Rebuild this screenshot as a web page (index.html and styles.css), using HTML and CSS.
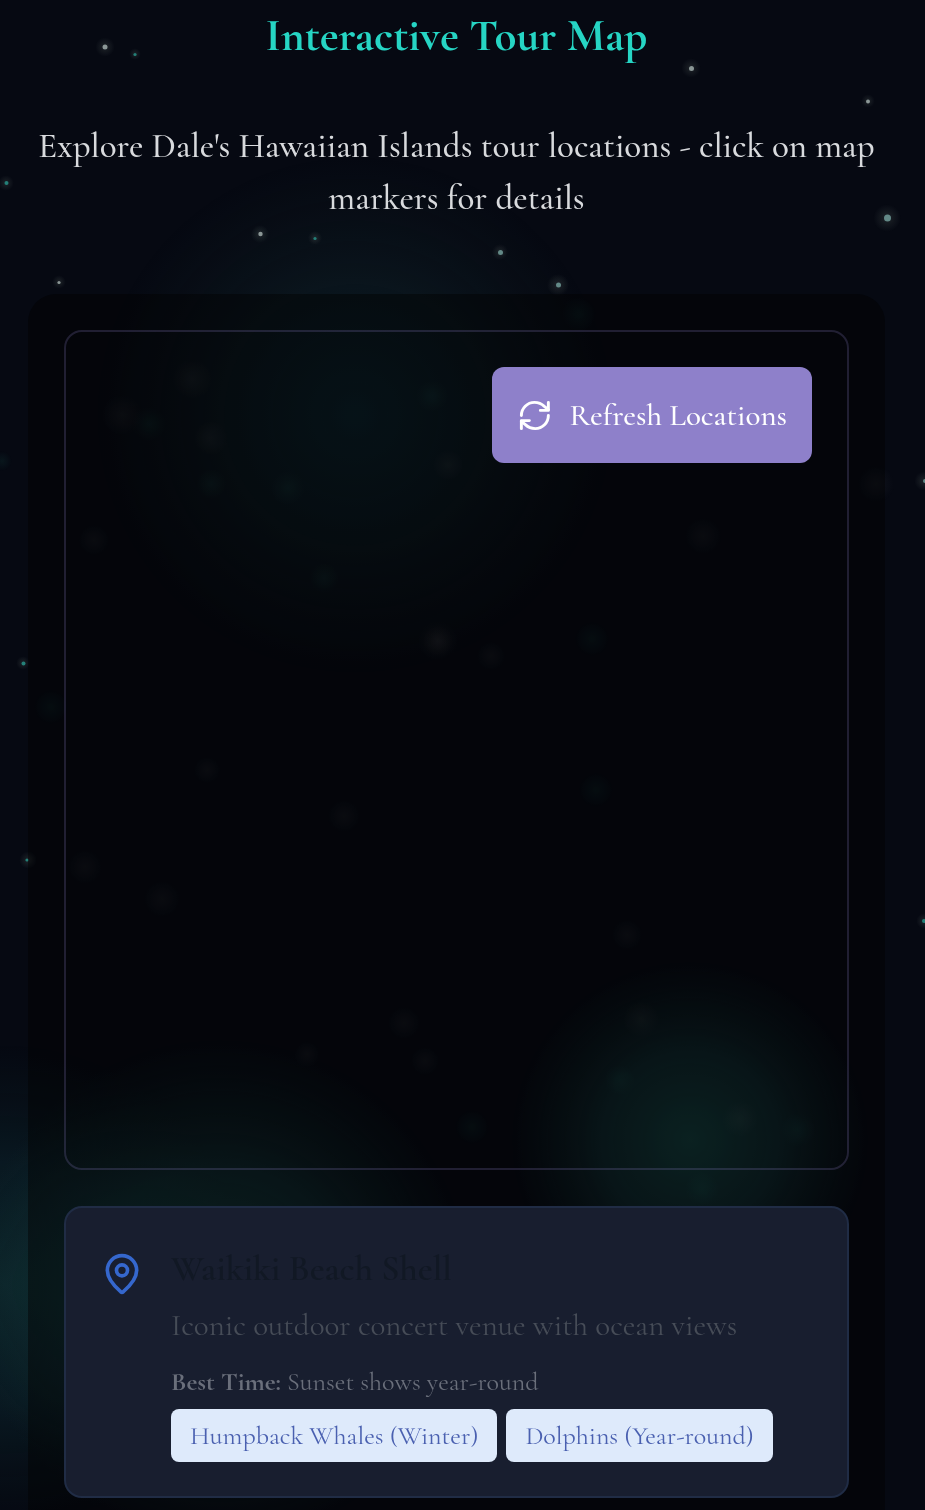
FILE: index.html
```html
<!DOCTYPE html>
<html lang="en">
<head>
<meta charset="utf-8">
<meta name="viewport" content="width=device-width, initial-scale=1">
<title>Interactive Tour Map</title>
<link rel="stylesheet" href="styles.css">
</head>
<body>
<svg class="sky" aria-hidden="true">
  <defs>
    <radialGradient id="teal"><stop offset="0" stop-color="#1c5e56" stop-opacity=".6"/><stop offset=".5" stop-color="#184c4c" stop-opacity=".42"/><stop offset=".8" stop-color="#123636" stop-opacity=".22"/><stop offset="1" stop-color="#0e2c2c" stop-opacity="0"/></radialGradient>
    <radialGradient id="edge"><stop offset="0" stop-color="#165050" stop-opacity=".4"/><stop offset=".5" stop-color="#12424a" stop-opacity=".28"/><stop offset="1" stop-color="#0c3030" stop-opacity="0"/></radialGradient>
    <radialGradient id="dim"><stop offset="0" stop-color="#0e3a44" stop-opacity=".48"/><stop offset=".5" stop-color="#122c32" stop-opacity=".34"/><stop offset="1" stop-color="#122426" stop-opacity="0"/></radialGradient>
    <radialGradient id="halo"><stop offset="0" stop-color="#a6b5a8" stop-opacity=".15"/><stop offset="1" stop-color="#a6b5a8" stop-opacity="0"/></radialGradient>
    <radialGradient id="mist"><stop offset="0" stop-color="#a8a8a4" stop-opacity=".07"/><stop offset="1" stop-color="#a8a8a4" stop-opacity="0"/></radialGradient>
    <radialGradient id="mist-teal"><stop offset="0" stop-color="#2a9a88" stop-opacity=".09"/><stop offset="1" stop-color="#2a9a88" stop-opacity="0"/></radialGradient>
  </defs>
  <circle cx="355" cy="415" r="258" fill="url(#dim)"/>
  <circle cx="690" cy="1140" r="178" fill="url(#teal)"/>
  <circle cx="5" cy="1285" r="240" fill="url(#edge)"/>
  <circle cx="220" cy="1290" r="250" fill="url(#teal)"/>
  <g fill="url(#halo)">
    <circle cx="105" cy="47" r="10"/><circle cx="135" cy="54" r="6"/><circle cx="691" cy="68" r="10"/><circle cx="868" cy="101" r="7"/><circle cx="6" cy="183" r="8"/><circle cx="887" cy="218" r="14"/><circle cx="260" cy="234" r="9"/><circle cx="315" cy="238" r="7"/><circle cx="500" cy="252" r="8"/><circle cx="558" cy="285" r="11"/><circle cx="59" cy="282" r="7"/><circle cx="924" cy="481" r="10"/><circle cx="23" cy="663" r="7"/><circle cx="28" cy="860" r="9"/><circle cx="924" cy="921" r="8"/>
  </g>
  <g fill="#8b9796">
    <circle cx="105" cy="47" r="2.5"/><circle cx="691.5" cy="68.5" r="2.5"/><circle cx="868" cy="101.5" r="2"/><circle cx="260.5" cy="234" r="2.2"/><circle cx="59" cy="282.5" r="1.6"/>
  </g>
  <g fill="#638987">
    <circle cx="887.5" cy="218" r="3.5"/><circle cx="558.5" cy="285" r="2.5"/><circle cx="500.5" cy="252.5" r="2.5"/><circle cx="925" cy="481" r="2"/>
  </g>
  <g fill="#248078">
    <circle cx="135" cy="54.5" r="1.6"/><circle cx="6.5" cy="183" r="2"/><circle cx="315" cy="238.5" r="1.6"/><circle cx="23.5" cy="663.5" r="2"/><circle cx="27" cy="860" r="1.6"/><circle cx="924" cy="921" r="2"/>
  </g>
  <g fill="url(#mist)">
    <circle cx="192" cy="379" r="20"/><circle cx="122" cy="415" r="20"/><circle cx="211" cy="438" r="17"/><circle cx="448" cy="465" r="15"/><circle cx="876" cy="484" r="19"/><circle cx="703" cy="536" r="19"/><circle cx="94" cy="540" r="16"/><circle cx="438" cy="641" r="20"/><circle cx="438" cy="641" r="15"/><circle cx="491" cy="656" r="15"/><circle cx="207" cy="770" r="14"/><circle cx="344" cy="816" r="17"/><circle cx="85" cy="867" r="18"/><circle cx="162" cy="899" r="19"/><circle cx="627" cy="935" r="16"/><circle cx="404" cy="1023" r="17"/><circle cx="641" cy="1019" r="18"/><circle cx="307" cy="1054" r="13"/><circle cx="425" cy="1061" r="15"/><circle cx="740" cy="1119" r="18"/>
  </g>
  <g fill="url(#mist-teal)">
    <circle cx="579" cy="314" r="17"/><circle cx="149" cy="424" r="17"/><circle cx="211" cy="484" r="15"/><circle cx="288" cy="488" r="17"/><circle cx="432" cy="396" r="16"/><circle cx="324" cy="578" r="15"/><circle cx="592" cy="639" r="17"/><circle cx="51" cy="707" r="17"/><circle cx="596" cy="790" r="17"/><circle cx="472" cy="1127" r="17"/><circle cx="620" cy="1080" r="15"/><circle cx="798" cy="1130" r="17"/><circle cx="702" cy="1189" r="17"/><circle cx="2" cy="461" r="10"/>
  </g>
</svg>
<main class="page">
  <header class="intro">
    <h1 class="title">Interactive Tour Map</h1>
    <p class="lead">Explore Dale's Hawaiian Islands tour locations - click on map markers for details</p>
  </header>
  <section class="panel">
    <div class="map">
      <button class="refresh" type="button">
        <svg class="refresh-icon" viewBox="0 0 24 24" aria-hidden="true"><path d="M3 12a9 9 0 0 1 9-9 9.75 9.75 0 0 1 6.74 2.74L21.5 8"/><path d="M21.5 3v5.500h-5.500"/><path d="M21.500 12a9 9 0 0 1-9 9 9.75 9.75 0 0 1-6.74-2.74L3 16"/><path d="M8.500 15.500H3V21"/></svg>
        <span>Refresh Locations</span>
      </button>
    </div>
    <article class="place">
      <svg class="pin" viewBox="0 0 24 24" aria-hidden="true"><path d="M20 10c0 4.993-5.539 10.193-7.399 11.799a1 1 0 0 1-1.202 0C9.539 20.193 4 14.993 4 10a8 8 0 0 1 16 0"/><circle cx="12" cy="10" r="3"/></svg>
      <div class="details">
        <h2 class="name">Waikiki Beach Shell</h2>
        <p class="about">Iconic outdoor concert venue with ocean views</p>
        <p class="time"><strong>Best Time:</strong> Sunset shows year-round</p>
        <div class="tags">
          <span class="tag">Humpback Whales (Winter)</span>
          <span class="tag">Dolphins (Year-round)</span>
        </div>
      </div>
    </article>
  </section>
</main>
</body>
</html>
```

FILE: styles.css
```css
* { box-sizing: border-box; margin: 0; }

body {
  background: #060912;
  color: #d8dadd;
  font-family: "Cormorant Garamond", "Liberation Serif", serif;
  overflow-x: hidden;
}

.sky {
  position: fixed;
  inset: 0;
  width: 100%;
  height: 100%;
  z-index: -1;
}

.page { padding: 10px 40px 0 28px; }

.intro {
  display: flex;
  flex-direction: column;
  gap: 58px;
  text-align: center;
}

.title {
  color: #26d5c4;
  font-size: 45px;
  font-weight: 700;
  line-height: 52px;
}

.lead { font-size: 35px; font-weight: 500; line-height: 52px; }

.panel {
  display: flex;
  flex-direction: column;
  gap: 36px;
  margin-top: 70px;
  padding: 36px 36px 12px;
  border-radius: 28px 28px 0 0;
  background: rgba(2, 2, 3, 0.45);
}

.map {
  display: flex;
  align-items: flex-start;
  justify-content: flex-end;
  min-height: 840px;
  padding: 35px;
  border: 2px solid rgba(142, 128, 202, 0.22);
  border-radius: 18px;
}

.refresh {
  display: flex;
  align-items: center;
  gap: 17px;
  min-height: 96px;
  padding: 0 25px;
  border: 0;
  border-radius: 12px;
  background: #8e80ca;
  color: #fff;
  font: 500 31px "Cormorant Garamond", "Liberation Serif", serif;
  cursor: pointer;
}

.refresh-icon,
.pin {
  flex: none;
  fill: none;
  stroke: currentColor;
  stroke-width: 2;
  stroke-linecap: round;
  stroke-linejoin: round;
}

.refresh-icon { width: 35px; height: 35px; }

.place {
  display: flex;
  gap: 27px;
  padding: 34px;
  border: 2px solid #202c45;
  border-radius: 18px;
  background: #181e2f;
}

.pin {
  width: 44px;
  height: 44px;
  margin-top: 10px;
  color: #3567cd;
}

.details { flex: 1; min-width: 0; }

.name {
  color: #111824;
  font-size: 36px;
  font-weight: 600;
  line-height: 54px;
}

.about {
  margin-top: 6px;
  color: #464c57;
  font-size: 31px;
  line-height: 46px;
}

.time {
  margin-top: 14px;
  color: #6a6f7b;
  font-size: 26px;
  line-height: 40px;
}

.tags {
  display: flex;
  flex-wrap: wrap;
  gap: 9px;
  margin-top: 7px;
}

.tag {
  padding: 0 19px;
  border-radius: 8px;
  background: #deeafb;
  color: #4a60b0;
  font-size: 26px;
  line-height: 53px;
}
```
